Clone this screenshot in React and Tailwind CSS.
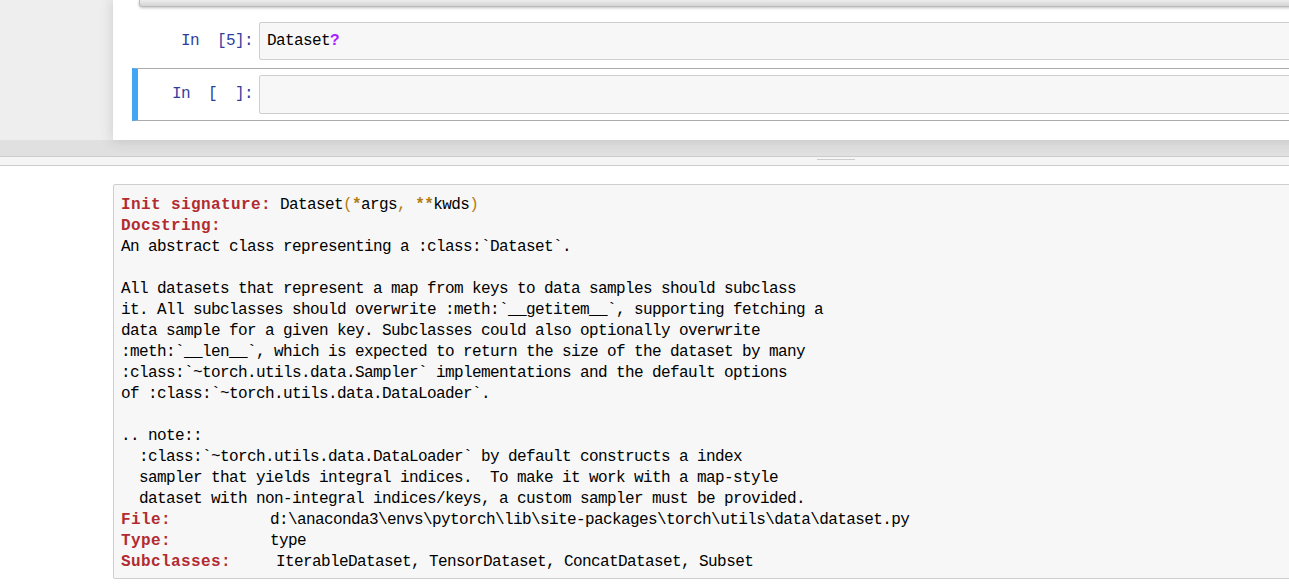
const Label = ({ children }) => (
  <span className="font-bold text-[#b22b31] tracking-[0.4px]">{children}</span>
)

const Op = ({ children, bold }) => (
  <span className={bold ? 'text-[#b27d12] font-bold' : 'text-[#b27d12]'}>{children}</span>
)

const docLines = [
  'An abstract class representing a :class:`Dataset`.',
  '',
  'All datasets that represent a map from keys to data samples should subclass',
  'it. All subclasses should overwrite :meth:`__getitem__`, supporting fetching a',
  'data sample for a given key. Subclasses could also optionally overwrite',
  ':meth:`__len__`, which is expected to return the size of the dataset by many',
  ':class:`~torch.utils.data.Sampler` implementations and the default options',
  'of :class:`~torch.utils.data.DataLoader`.',
  '',
  '.. note::',
  '  :class:`~torch.utils.data.DataLoader` by default constructs a index',
  '  sampler that yields integral indices.  To make it work with a map-style',
  '  dataset with non-integral indices/keys, a custom sampler must be provided.',
]

const App = () => {
  return (
    <div className="w-[1289px] h-[584px] overflow-hidden bg-white font-['Liberation_Mono',monospace] text-[16px] tracking-[-0.6px] text-black">
      {/* notebook */}
      <div className="flex h-[140px] bg-[#eeeeee]">
        <div className="w-[113px] shrink-0" />
        <div className="w-[1200px] shrink-0 bg-white shadow-[0_0_12px_1px_rgba(87,87,87,0.2)] pl-[19px]">
          <div className="ml-[7px] h-[7px] bg-gradient-to-b from-[#ededed] to-[#d4d4d4] border-b border-l border-[#bababa] rounded-bl-[3px] shadow-[0_1px_3px_rgba(0,0,0,0.25)]" />

          <div className="mt-[8px] flex items-center border border-transparent border-l-[6px] pt-[6px] pb-[6px]">
            <div className="w-[115px] shrink-0 text-right whitespace-pre leading-[21px] text-[#303f9f]">In  [5]:</div>
            <div className="ml-[6px] flex-1 h-[38px] flex items-center pl-[7px] bg-[#f7f7f7] border border-[#cfcfcf] rounded-[2px] leading-[21px]">
              <span>Dataset</span>
              <span className="text-[#aa22ff] font-bold">?</span>
            </div>
          </div>

          <div className="mt-[1px] flex items-center border-t border-b border-[#ababab] border-l-[6px] border-l-[#42a5f5] pt-[6px] pb-[6px]">
            <div className="w-[115px] shrink-0 text-right whitespace-pre leading-[21px] text-[#303f9f]">In  [  ]:</div>
            <div className="ml-[6px] flex-1 h-[39px] bg-[#f7f7f7] border border-[#cfcfcf] rounded-[2px]" />
          </div>
        </div>
      </div>

      <div className="h-[16px] bg-[#e0e0e0]" />
      <div className="h-[10px] bg-[#f5f5f5] border-t border-b border-[#cccccc]">
        <div className="mt-[2px] ml-[817px] w-[38px] h-px bg-[#cccccc]" />
      </div>

      {/* pager */}
      <div className="pt-[18px]">
        <div className="ml-[113px] w-[1200px] bg-[#f7f7f7] border border-[#cfcfcf] rounded-[2px] pl-[7px] pt-[10px] pb-[5px] leading-[21px] whitespace-pre">
          <div>
            <Label>Init signature:</Label> Dataset<Op>(</Op><Op bold>*</Op>args<Op>,</Op> <Op bold>**</Op>kwds<Op>)</Op>
          </div>
          <div><Label>Docstring:</Label></div>
          {docLines.map((line, index) => (
            <div key={index} className="h-[21px]">{line}</div>
          ))}
          <div><Label>File:</Label>{'           '}d:\anaconda3\envs\pytorch\lib\site-packages\torch\utils\data\dataset.py</div>
          <div><Label>Type:</Label>{'           '}type</div>
          <div><Label>Subclasses:</Label>{'     '}IterableDataset, TensorDataset, ConcatDataset, Subset</div>
        </div>
      </div>
    </div>
  )
}

export default App
